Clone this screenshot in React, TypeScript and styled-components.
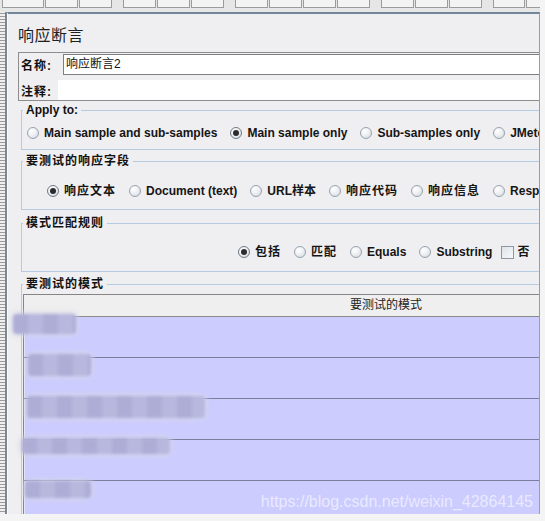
import styled, { createGlobalStyle } from "styled-components"

const GlobalStyle = createGlobalStyle`
	body {
		margin: 0;
		background: #f4f4f4;
		font-family: "Liberation Sans", "Noto Sans CJK SC", sans-serif;
	}
`

type Option = { label: string; checked?: boolean; cjk?: boolean; box?: boolean }

const stripGroups = [[42, 33, 33], [33, 33, 33], [33, 33, 33, 33], [33, 33, 33], [32, 33, 33]]

const applyOptions: Option[] = [
	{ label: "Main sample and sub-samples" },
	{ label: "Main sample only", checked: true },
	{ label: "Sub-samples only" },
	{ label: "JMeter Variable" },
]

const fieldOptions: Option[] = [
	{ label: "响应文本", checked: true, cjk: true },
	{ label: "Document (text)" },
	{ label: "URL样本" },
	{ label: "响应代码", cjk: true },
	{ label: "响应信息", cjk: true },
	{ label: "Response Headers" },
	{ label: "Ignore Status", box: true },
]

const patternOptions: Option[] = [
	{ label: "包括", checked: true, cjk: true },
	{ label: "匹配", cjk: true },
	{ label: "Equals" },
	{ label: "Substring" },
	{ label: "否", cjk: true, box: true },
]

// redacted cells in the pattern table
const blobs = [
	{ x: -11, y: -3, w: 63, h: 20 },
	{ x: 4, y: 37, w: 63, h: 22 },
	{ x: 3, y: 79, w: 178, h: 22 },
	{ x: -2, y: 121, w: 148, h: 16 },
	{ x: 1, y: 164, w: 66, h: 17 },
]

const OptionRow = ({ options, indent }: { options: Option[]; indent: number }) => (
	<Row $indent={indent}>
		{options.map((o) => (
			<Item key={o.label} $box={!!o.box}>
				{o.box ? <CheckBox /> : <Radio $checked={!!o.checked} />}
				<ItemLabel $cjk={!!o.cjk}>{o.label}</ItemLabel>
			</Item>
		))}
	</Row>
)

const App = () => {
	return (
		<>
			<GlobalStyle />
			<Window>
				<Strip>
					{stripGroups.map((g, i) => (
						<StripGroup key={i}>
							{g.map((w, j) => (
								<StripBox key={j} $w={w} />
							))}
						</StripGroup>
					))}
				</Strip>
				<Body>
					<Rail />
					<Panel>
						<Content>
							<Title>响应断言</Title>
							<NameBox>
								<NameRow>
									<FieldLabel $w={44}>名称:</FieldLabel>
									<NameInput>响应断言2</NameInput>
								</NameRow>
								<CommentRow>
									<FieldLabel $w={39}>注释:</FieldLabel>
									<CommentInput />
								</CommentRow>
							</NameBox>

							<Group $top={2} $pt={7} $pb={7}>
								<Legend>Apply to:</Legend>
								<OptionRow options={applyOptions} indent={5} />
							</Group>

							<Group $top={4} $pt={14} $pb={9}>
								<Legend $cjk>要测试的响应字段</Legend>
								<OptionRow options={fieldOptions} indent={25} />
							</Group>

							<Group $top={6} $pt={13} $pb={10}>
								<Legend $cjk>模式匹配规则</Legend>
								<OptionRow options={patternOptions} indent={216} />
							</Group>

							<Group $top={5} $pt={3} $pb={0}>
								<Legend $cjk>要测试的模式</Legend>
								<Table>
									<TableHead>要测试的模式</TableHead>
									<TableBody>
										{[0, 1, 2, 3, 4].map((r) => (
											<TableRow key={r} />
										))}
										{blobs.map((b, i) => (
											<Blob key={i} $x={b.x} $y={b.y} $w={b.w} $h={b.h} />
										))}
									</TableBody>
								</Table>
							</Group>
						</Content>
					</Panel>
				</Body>
				<Watermark>https://blog.csdn.net/weixin_42864145</Watermark>
			</Window>
		</>
	)
}

export default App

const Window = styled.div`
	position: relative;
	width: 540px;
	height: 514px;
	display: flex;
	flex-direction: column;
	overflow: hidden;
	background: #efeef0;
`

const Strip = styled.div`
	height: 12px;
	flex: none;
	display: flex;
	gap: 11px;
	padding-left: 2px;
	background: #e6e6e6;
	overflow: hidden;
`

const StripGroup = styled.div`
	display: flex;
	gap: 1px;
`

const StripBox = styled.div<{ $w: number }>`
	width: ${(p) => p.$w - 2}px;
	height: 7px;
	border: 1px solid #9b9b9b;
	border-top: none;
	background: #f3f3f3;
`

const Body = styled.div`
	flex: 1;
	display: flex;
	min-height: 0;
`

const Rail = styled.div`
	width: 5px;
	flex: none;
	border-right: 2px solid #7b8793;
	background-color: #efefef;
	background-image: radial-gradient(circle, #9a9a9a 0.7px, transparent 0.9px);
	background-size: 2px 3px;
`

const Panel = styled.div`
	flex: 1;
	min-width: 0;
	border-top: 2px solid #72869a;
	border-left: 1px solid #fafafa;
	border-right: 1px solid #9d9d9d;
	overflow: hidden;
	background: #efeef0;
`

const Content = styled.div`
	width: 760px;
	padding: 12px 0 0 10px;
`

const Title = styled.div`
	font-size: 16px;
	line-height: 20px;
	letter-spacing: 0.5px;
	color: #1e1e1e;
`

const NameBox = styled.div`
	margin-top: 6px;
	border: 1px solid #8d8d8d;
	padding-top: 1px;
	display: flex;
	flex-direction: column;
	gap: 5px;
`

const NameRow = styled.div`
	display: flex;
	align-items: center;
	height: 21px;
`

const CommentRow = styled.div`
	display: flex;
	align-items: center;
	height: 20px;
`

const FieldLabel = styled.div<{ $w: number }>`
	width: ${(p) => p.$w - 2}px;
	padding-left: 2px;
	flex: none;
	font-size: 12px;
	font-weight: bold;
	letter-spacing: 1px;
	color: #111;
`

const NameInput = styled.div`
	flex: 1;
	height: 19px;
	line-height: 19px;
	padding-left: 2px;
	border: 1px solid #7e7e7e;
	border-right: none;
	background: #fff;
	font-size: 12px;
	color: #111;
`

const CommentInput = styled.div`
	flex: 1;
	height: 20px;
	background: #fff;
`

const Group = styled.fieldset<{ $top: number; $pt: number; $pb: number }>`
	width: 726px;
	margin: ${(p) => p.$top}px 0 0 3px;
	padding: ${(p) => p.$pt}px 0 ${(p) => p.$pb}px 0;
	border: 1px solid #b6cbdf;
	min-width: 0;
`

const Legend = styled.legend<{ $cjk?: boolean }>`
	margin-left: 1px;
	padding: 0 3px;
	font-size: 12px;
	line-height: 14px;
	font-weight: bold;
	letter-spacing: ${(p) => (p.$cjk ? "1px" : "0")};
	color: #111;
`

const Row = styled.div<{ $indent: number }>`
	display: flex;
	align-items: center;
	height: 18px;
	padding-left: ${(p) => p.$indent}px;
	white-space: nowrap;
	gap: 13px;
`

const Item = styled.div<{ $box: boolean }>`
	display: flex;
	align-items: center;
	gap: ${(p) => (p.$box ? "3px" : "5px")};
	margin-left: ${(p) => (p.$box ? "-4px" : "0")};
`

const Radio = styled.span<{ $checked: boolean }>`
	position: relative;
	width: 10px;
	height: 10px;
	border-radius: 50%;
	border: 1px solid ${(p) => (p.$checked ? "#6f7a86" : "#98a3ae")};
	background: radial-gradient(circle at 35% 30%, #ffffff 0%, #eef0f3 45%, #cfd5dc 100%);
	&::after {
		content: "";
		display: ${(p) => (p.$checked ? "block" : "none")};
		position: absolute;
		left: 2px;
		top: 2px;
		width: 6px;
		height: 6px;
		border-radius: 50%;
		background: #2b2b2b;
	}
`

const CheckBox = styled.span`
	width: 11px;
	height: 11px;
	border: 1px solid #8c97a3;
	background: linear-gradient(135deg, #dfe4ea, #f7f8fa);
`

const ItemLabel = styled.span<{ $cjk: boolean }>`
	font-size: 12px;
	line-height: 18px;
	font-weight: bold;
	letter-spacing: ${(p) => (p.$cjk ? "1px" : "0")};
	color: #151515;
`

const Table = styled.div`
	margin-left: 1px;
	width: 724px;
	border-top: 1px solid #858585;
	border-left: 1px solid #858585;
`

const TableHead = styled.div`
	height: 21px;
	line-height: 21px;
	text-align: center;
	font-size: 12px;
	color: #222;
	background: #efefef;
	border-bottom: 1px solid #8a8a8a;
`

const TableBody = styled.div`
	position: relative;
	background: #ccccff;
	box-shadow: inset 1px 0 #e4e4f6;
`

const TableRow = styled.div`
	height: 40px;
	border-bottom: 1px solid #7c7c9c;
`

const Blob = styled.div<{ $x: number; $y: number; $w: number; $h: number }>`
	position: absolute;
	left: ${(p) => p.$x}px;
	top: ${(p) => p.$y}px;
	width: ${(p) => p.$w}px;
	height: ${(p) => p.$h}px;
	background: repeating-linear-gradient(90deg, #adadd6 0 15px, #b8b8de 15px 30px);
	box-shadow: 0 0 4px 2px rgba(214, 214, 232, 0.85);
	filter: blur(1.4px);
	border-radius: 4px;
`

const Watermark = styled.div`
	position: absolute;
	right: 7px;
	bottom: 3px;
	font-family: "Liberation Sans", sans-serif;
	font-size: 16px;
	line-height: 18px;
	color: rgba(255, 255, 255, 0.6);
	white-space: nowrap;
`
